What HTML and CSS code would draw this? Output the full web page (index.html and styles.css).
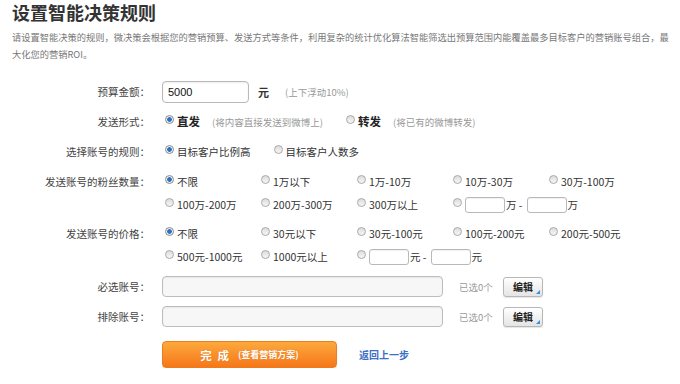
FILE: index.html
```html
<!DOCTYPE html>
<html lang="zh-CN">
<head>
<meta charset="utf-8">
<title>设置智能决策规则</title>
<link rel="stylesheet" href="styles.css">
</head>
<body>
<div class="page">
  <h1 class="title">设置智能决策规则</h1>
  <p class="desc">请设置智能决策的规则，微决策会根据您的营销预算、发送方式等条件，利用复杂的统计优化算法智能筛选出预算范围内能覆盖最多目标客户的营销账号组合，最大化您的营销ROI。</p>

  <div class="form">
    <div class="row">
      <div class="label">预算金额：</div>
      <div class="field">
        <input class="text budget" type="text" value="5000">
        <span class="unit">元</span>
        <span class="note note-budget">(上下浮动10%)</span>
      </div>
    </div>

    <div class="row">
      <div class="label">发送形式：</div>
      <div class="field">
        <label class="opt"><input class="radio" type="radio" name="mode" checked><b class="strong">直发</b></label>
        <span class="note">(将内容直接发送到微博上)</span>
        <label class="opt opt-next"><input class="radio" type="radio" name="mode"><b class="strong">转发</b></label>
        <span class="note">(将已有的微博转发)</span>
      </div>
    </div>

    <div class="row">
      <div class="label">选择账号的规则：</div>
      <div class="field">
        <label class="opt"><input class="radio" type="radio" name="rule" checked>目标客户比例高</label>
        <label class="opt opt-next"><input class="radio" type="radio" name="rule">目标客户人数多</label>
      </div>
    </div>

    <div class="row">
      <div class="label">发送账号的粉丝数量：</div>
      <div class="grid">
        <label class="opt"><input class="radio" type="radio" name="fans" checked>不限</label>
        <label class="opt"><input class="radio" type="radio" name="fans">1万以下</label>
        <label class="opt"><input class="radio" type="radio" name="fans">1万-10万</label>
        <label class="opt"><input class="radio" type="radio" name="fans">10万-30万</label>
        <label class="opt"><input class="radio" type="radio" name="fans">30万-100万</label>
        <label class="opt"><input class="radio" type="radio" name="fans">100万-200万</label>
        <label class="opt"><input class="radio" type="radio" name="fans">200万-300万</label>
        <label class="opt"><input class="radio" type="radio" name="fans">300万以上</label>
        <label class="opt span2"><input class="radio" type="radio" name="fans"><input class="mini" type="text"><span class="sep">万 -</span><input class="mini" type="text"><span class="tail">万</span></label>
      </div>
    </div>

    <div class="row row-price">
      <div class="label">发送账号的价格：</div>
      <div class="grid">
        <label class="opt"><input class="radio" type="radio" name="price" checked>不限</label>
        <label class="opt"><input class="radio" type="radio" name="price">30元以下</label>
        <label class="opt"><input class="radio" type="radio" name="price">30元-100元</label>
        <label class="opt"><input class="radio" type="radio" name="price">100元-200元</label>
        <label class="opt"><input class="radio" type="radio" name="price">200元-500元</label>
        <label class="opt"><input class="radio" type="radio" name="price">500元-1000元</label>
        <label class="opt"><input class="radio" type="radio" name="price">1000元以上</label>
        <label class="opt span3"><input class="radio" type="radio" name="price"><input class="mini" type="text"><span class="sep">元 -</span><input class="mini" type="text"><span class="tail">元</span></label>
      </div>
    </div>

    <div class="row">
      <div class="label">必选账号：</div>
      <div class="field">
        <input class="wide" type="text">
        <span class="count">已选0个</span>
        <button class="edit" type="button">编辑</button>
      </div>
    </div>

    <div class="row">
      <div class="label">排除账号：</div>
      <div class="field">
        <input class="wide" type="text">
        <span class="count">已选0个</span>
        <button class="edit" type="button">编辑</button>
      </div>
    </div>

    <div class="row row-actions">
      <div class="label"></div>
      <div class="field">
        <button class="submit" type="button"><span class="submit-main">完 成</span><span class="submit-sub">(查看营销方案)</span></button>
        <a class="back" href="#">返回上一步</a>
      </div>
    </div>
  </div>
</div>
</body>
</html>
```

FILE: styles.css
```css
* {
  box-sizing: border-box;
}

body {
  margin: 0;
  background: #fff;
  font-family: "Noto Sans CJK SC", "Noto Sans", sans-serif;
  color: #333;
}

.page {
  padding: 0 8px 0 12px;
}

.title {
  margin: 0;
  padding-top: 1px;
  font-size: 18px;
  line-height: 22px;
  font-weight: 700;
  color: #333;
}

.desc {
  margin: 6px 0 0;
  width: 660px;
  font-size: 9.25px;
  line-height: 16.5px;
  color: #777;
}

.form {
  margin-top: 18px;
  display: flex;
  flex-direction: column;
  gap: 7px;
}

.row {
  display: flex;
  align-items: flex-start;
}

.row-price {
  margin-top: -1px;
}

.row-actions {
  margin-top: 6px;
}

.label {
  flex: none;
  width: 138px;
  margin-right: 12px;
  text-align: right;
  font-size: 10.5px;
  line-height: 23px;
  color: #444;
  white-space: nowrap;
}

.field {
  display: flex;
  align-items: center;
  min-height: 23px;
  font-size: 10.5px;
}

.text {
  height: 22px;
  border: 1px solid #b9b9b9;
  border-radius: 4px;
  background: #fff;
  box-shadow: inset 0 1px 2px rgba(0, 0, 0, 0.08);
  font-family: "Liberation Sans", "Noto Sans", sans-serif;
  font-size: 11px;
  color: #111;
  padding: 0 5px;
  outline: none;
}

.budget {
  width: 87px;
}

.unit {
  margin-left: 9px;
  font-weight: 700;
  font-size: 11px;
  color: #333;
}

.note {
  margin-left: 12px;
  font-size: 9.5px;
  color: #999;
  white-space: nowrap;
}

.note-budget {
  margin-left: 16px;
}

.opt {
  display: inline-flex;
  align-items: center;
  white-space: nowrap;
  font-size: 10.5px;
  color: #333;
  line-height: 23px;
}

.opt-next {
  margin-left: 20px;
}

.strong {
  font-size: 11.5px;
  font-weight: 700;
  color: #222;
}

.radio {
  -webkit-appearance: none;
  appearance: none;
  flex: none;
  margin: 0 3px 0 3px;
  width: 9px;
  height: 9px;
  border-radius: 50%;
  border: 1px solid #a9a9a9;
  background: linear-gradient(#dcdcdc, #f7f7f7);
  position: relative;
  top: -2px;
}

.radio:checked {
  border-color: #8a8a8a;
  background: radial-gradient(circle, #2f6fc0 0, #2f6fc0 2px, #e9eef5 2.6px, #ffffff 100%);
}

.grid {
  display: grid;
  grid-template-columns: repeat(4, 96px) auto;
  grid-auto-rows: 23px;
  align-items: center;
}

.span2 {
  grid-column: span 2;
}

.span3 {
  grid-column: span 3;
}

.mini {
  width: 40px;
  height: 16px;
  border: 1px solid #b9b9b9;
  border-radius: 3px;
  background: #fff;
  box-shadow: inset 0 1px 1px rgba(0, 0, 0, 0.06);
  outline: none;
  padding: 0;
}

.sep {
  margin: 0 4px 0 1px;
}

.tail {
  margin-left: 1px;
}

.wide {
  width: 281px;
  height: 21px;
  border: 1px solid #bdbdbd;
  border-radius: 4px;
  background: #f7f7f7;
  box-shadow: inset 0 1px 2px rgba(0, 0, 0, 0.07);
  outline: none;
}

.count {
  width: 44px;
  margin-left: 16px;
  font-size: 9.5px;
  color: #9a9a9a;
}

.edit {
  position: relative;
  width: 40px;
  height: 20px;
  padding: 0;
  border: 1px solid #b7b7b7;
  border-radius: 3px;
  background: linear-gradient(#ffffff, #e4e4e4);
  font-family: "Noto Sans CJK SC", sans-serif;
  font-size: 10px;
  font-weight: 700;
  color: #222;
  box-shadow: 0 1px 1px rgba(0, 0, 0, 0.1);
}

.edit::after {
  content: "";
  position: absolute;
  right: 2px;
  bottom: 2px;
  width: 0;
  height: 0;
  border-left: 4px solid transparent;
  border-bottom: 4px solid #3b8fe0;
}

.submit {
  width: 175px;
  height: 27px;
  padding: 0;
  border: 1px solid #ea7d1e;
  border-radius: 4px;
  background: linear-gradient(#fca93c, #f6771a);
  color: #fff;
  font-family: "Noto Sans CJK SC", sans-serif;
  font-weight: 700;
  display: flex;
  align-items: center;
  justify-content: center;
  text-shadow: 0 0 1px rgba(160, 70, 0, 0.4);
  box-shadow: 0 1px 1px rgba(0, 0, 0, 0.08);
}

.submit-main {
  font-size: 11.5px;
  word-spacing: 3px;
}

.submit-sub {
  margin-left: 9px;
  font-size: 9px;
}

.back {
  margin-left: 22px;
  font-size: 10px;
  font-weight: 700;
  color: #3b6fc6;
  text-decoration: none;
}
```
